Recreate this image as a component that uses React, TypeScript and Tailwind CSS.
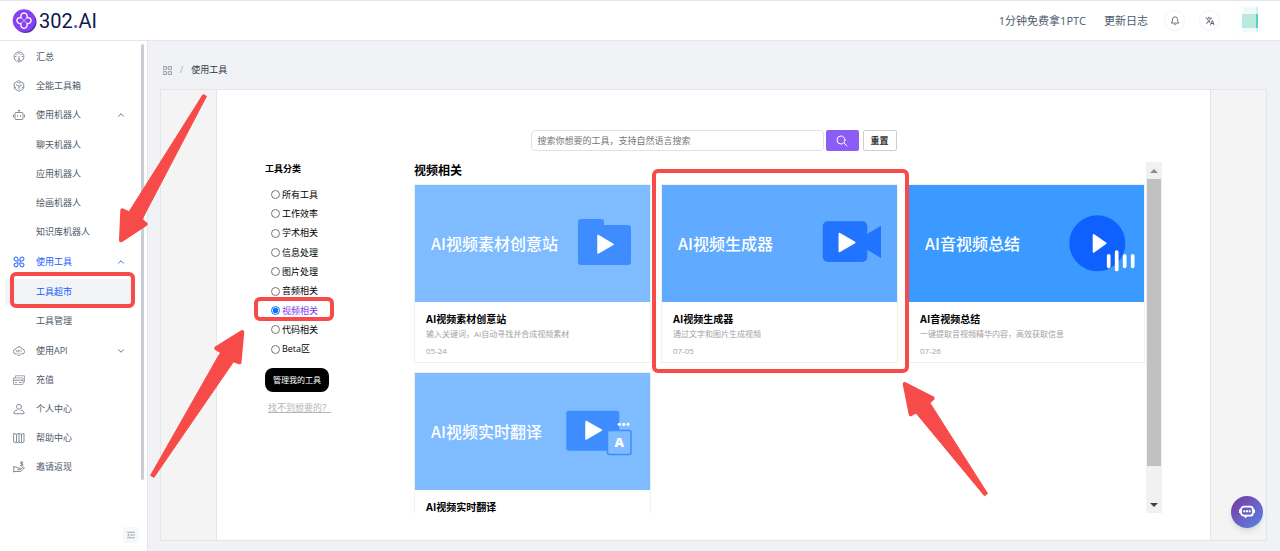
import { ReactNode, useState } from 'react';
import { LuBell, LuChevronDown, LuChevronUp } from 'react-icons/lu';
import { MdTranslate } from 'react-icons/md';

const stroke = {
  fill: 'none',
  stroke: 'currentColor',
  strokeLinecap: 'round' as const,
  strokeLinejoin: 'round' as const,
};

function Icon({ children }: { children: ReactNode }) {
  return (
    <svg viewBox="0 0 24 24" className="size-3 shrink-0" strokeWidth={2} {...stroke}>
      {children}
    </svg>
  );
}

const icons = {
  gauge: (
    <Icon>
      <path d="M7 20.500a10 10 0 1 1 10 0" />
      <path d="M12 4v2M4.500 11H6M19.500 11H18M7 6l1 1.500M17 6l-1 1.500M12 11v6" />
      <circle cx="12" cy="19.500" r="2.500" />
    </Icon>
  ),
  box: (
    <Icon>
      <path d="M12 1.500 21.500 7v10L12 22.500 2.500 17V7z" />
      <path d="M6.500 9.500L12 12.500l5.500-3M12 12.500V18M9 4.500l3 2 3-2M3 13.500l2.500 2M21 13.500l-2.500 2" />
    </Icon>
  ),
  robot: (
    <Icon>
      <rect x="4" y="7" width="16" height="14" rx="2" />
      <path d="M12 7V3M10.500 3h3M1 12v4M23 12v4M9 13v1.500M15 13v1.500" />
    </Icon>
  ),
  tools: (
    <Icon>
      <path d="M10 10H6a4 4 0 1 1 4-4zM14 10V6a4 4 0 1 1 4 4zM10 14v4a4 4 0 1 1-4-4zM14 14h4a4 4 0 1 1-4 4z" />
    </Icon>
  ),
  api: (
    <Icon>
      <path d="M8 18H6a5 5 0 0 1-.5-10 7 7 0 0 1 13 0A5 5 0 0 1 18 18h-2" />
      <path d="M6 14l1.500-4L9 14M11 14v-4h2v2h-2M16 10v4M12 17v4M10 21h4" strokeWidth={1.300} />
    </Icon>
  ),
  card: (
    <Icon>
      <path d="M5 7V3.500h18V16h-2" strokeWidth={1.500} />
      <rect x="1" y="8" width="19" height="13" rx="1" strokeWidth={1.500} />
      <path d="M1 12.500h19M5 17h2M13 17h3" />
    </Icon>
  ),
  user: (
    <Icon>
      <circle cx="12" cy="7.500" r="5" />
      <path d="M8 14.500H6L2 18v3.500h20V18l-4-3.500h-2" />
    </Icon>
  ),
  book: (
    <Icon>
      <path d="M2 3l5 1.500L12 3l5 1.500L22 3v17l-5 1.500-5-1.500-5 1.500L2 20zM7 5v14M12 3v17M17 5v14" />
    </Icon>
  ),
  reward: (
    <Icon>
      <path d="M1.500 11v11M1.500 12H6l4 2h4.500v3.500H9M14.500 16.500L21 12l2 1.500L15.500 21H1.500" />
      <path d="M19.500 2.500h-4V5.500h4V9h-4M17.500 1v9.500" />
    </Icon>
  ),
};

interface MenuEntry {
  label: string;
  icon: ReactNode;
  children?: string[];
  folded?: boolean;
  active?: boolean;
}

const menu: MenuEntry[] = [
  { label: '汇总', icon: icons.gauge },
  { label: '全能工具箱', icon: icons.box },
  {
    label: '使用机器人',
    icon: icons.robot,
    children: ['聊天机器人', '应用机器人', '绘画机器人', '知识库机器人'],
  },
  { label: '使用工具', icon: icons.tools, children: ['工具超市', '工具管理'], active: true },
  { label: '使用API', icon: icons.api, folded: true },
  { label: '充值', icon: icons.card },
  { label: '个人中心', icon: icons.user },
  { label: '帮助中心', icon: icons.book },
  { label: '邀请返现', icon: icons.reward },
];

const categories = [
  '所有工具',
  '工作效率',
  '学术相关',
  '信息处理',
  '图片处理',
  '音频相关',
  '视频相关',
  '代码相关',
  'Beta区',
];

interface Tool {
  title: string;
  desc?: string;
  date?: string;
  bg: string;
  marked?: boolean;
  art: ReactNode;
}

const tools: Tool[] = [
  {
    title: 'AI视频素材创意站',
    desc: '输入关键词，AI自动寻找并合成视频素材',
    date: '05-24',
    bg: 'bg-[#7ebcff]',
    art: (
      <>
        <path
          d="M16 12h20a3 3 0 0 1 3 3v3h24a3 3 0 0 1 3 3v34a3 3 0 0 1-3 3H16a3 3 0 0 1-3-3V15a3 3 0 0 1 3-3z"
          fill="#3f8cff"
        />
        <path d="M33 28.500v17.500l15-8.700z" fill="#fff" stroke="#fff" strokeWidth="1.500" strokeLinejoin="round" />
      </>
    ),
  },
  {
    title: 'AI视频生成器',
    desc: '通过文字和图片生成视频',
    date: '07-05',
    bg: 'bg-[#60abff]',
    marked: true,
    art: (
      <>
        <rect x="10.700" y="14.300" width="44.600" height="40.700" rx="5" fill="#2174ff" />
        <path d="M55 27l14-8.300V51l-14-8.300z" fill="#2174ff" />
        <path d="M27.300 26.500v18l15.500-9z" fill="#fff" stroke="#fff" strokeWidth="1.500" strokeLinejoin="round" />
      </>
    ),
  },
  {
    title: 'AI音视频总结',
    desc: '一键提取音视频精华内容，高效获取信息',
    date: '07-26',
    bg: 'bg-[#3b9aff]',
    art: (
      <>
        <circle cx="38.300" cy="36.300" r="28" fill="#0f60ff" />
        <path d="M34.700 28v16.700l11.800-8.400z" fill="#fff" stroke="#fff" strokeWidth="2" strokeLinejoin="round" />
        <path
          d="M49.700 48.800v10.500M57.700 45.200v17.300M65.700 48.800v10.500M73.700 48.800v10.500"
          stroke="#fff"
          strokeWidth="3.700"
          strokeLinecap="round"
        />
      </>
    ),
  },
  {
    title: 'AI视频实时翻译',
    bg: 'bg-[#7ebcff]',
    art: (
      <>
        <rect x="1.300" y="15.700" width="53" height="40" rx="2.500" fill="#3f8cff" />
        <path d="M21 26.500v17.500l15.500-8.800z" fill="#fff" stroke="#fff" strokeWidth="1.500" strokeLinejoin="round" />
        <g fill="#fff">
          <circle cx="54.300" cy="29.300" r="1.600" />
          <circle cx="58.700" cy="29.300" r="1.600" />
          <circle cx="63" cy="29.300" r="1.600" />
        </g>
        <rect x="42.500" y="35.500" width="23.500" height="24" rx="2" fill="#7ebcff" stroke="#3f8cff" strokeWidth="1.500" />
        <text x="54.300" y="52" textAnchor="middle" fontSize="13" fontWeight="800" fill="#fff">
          A
        </text>
      </>
    ),
  },
];

function Header() {
  return (
    <header className="flex h-[41px] items-center justify-between border-y border-[#e5e6eb] bg-white pr-[21px] pl-3">
      <a href="#" className="flex items-center gap-px">
        <svg viewBox="0 0 26 26" className="size-[26px]">
          <circle cx="13.500" cy="14" r="11" fill="#4a35b0" />
          <circle cx="12" cy="12.500" r="11.300" fill="#8a3ff0" />
          <path
            d="M9 9.300a3.200 3.200 0 1 1 6 0v.5a3 3 0 1 1 0 5.600v.6a3.200 3.200 0 1 1-6 0v-.6a3 3 0 1 1 0-5.600z"
            fill="none"
            stroke="#fff"
            strokeWidth="1.300"
          />
          <path d="M9.500 10l5 5M14.500 10l-5 5" stroke="#fff" strokeWidth=".6" />
        </svg>
        <span className="font-['Roboto',sans-serif] text-[20px] leading-6 text-[#0b1b4a]">
          302<span className="font-bold text-[#8a3ff0]">.</span>AI
        </span>
      </a>
      <nav className="flex items-center text-[11px] text-[#4e5969]">
        <a href="#">1分钟免费拿1PTC</a>
        <a href="#" className="ml-[18px]">
          更新日志
        </a>
        <button
          aria-label="通知"
          className="ml-4 grid size-[21px] place-items-center rounded-full border border-[#f2f3f5]"
        >
          <LuBell size={10} />
        </button>
        <button
          aria-label="语言"
          className="ml-[14px] grid size-[21px] place-items-center rounded-full border border-[#f2f3f5]"
        >
          <MdTranslate size={10} />
        </button>
        <svg viewBox="0 0 28 28" className="ml-[11px] size-7">
          <path d="M0 0h28v28H0z" fill="#fdfefe" />
          <path d="M12 0h13v7H12zM12 21h13v4H12z" fill="#f0faf8" />
          <path d="M11 7h14v14H11z" fill="#b9e9df" />
          <path d="M25 7h2v14h-2z" fill="#55d3bd" />
          <path d="M25 0h2v7h-2zM25 21h2v4h-2z" fill="#d5f1eb" />
        </svg>
      </nav>
    </header>
  );
}

function Sidebar() {
  return (
    <aside className="flex w-[148px] shrink-0 flex-col justify-between border-r border-[#e5e6eb] bg-white">
      <div className="flex justify-between pt-[3px] pr-[3px] pl-[5px]">
        <ul className="flex w-[129px] flex-col gap-[3px]">
          {menu.map((item) => (
            <li key={item.label} className={item.active ? 'text-[#165dff]' : 'text-[#4e5969]'}>
              <button className="flex h-[26px] w-full items-center gap-[11px] px-2">
                <span className={item.active ? 'text-[#165dff]' : 'text-[#86909c]'}>{item.icon}</span>
                {item.label}
                {item.children && <LuChevronUp size={10} className="ml-auto" />}
                {item.folded && <LuChevronDown size={10} className="ml-auto" />}
              </button>
              {item.children && (
                <ul className="flex flex-col gap-[3px] pt-1 pb-px text-[#4e5969]">
                  {item.children.map((child) => (
                    <li key={child} className="relative">
                      <a
                        href="#"
                        className={
                          child === '工具超市'
                            ? 'flex h-[26px] items-center rounded-xs bg-[#f2f3f5] pl-[31px] text-[#165dff]'
                            : 'flex h-[26px] items-center pl-[31px]'
                        }
                      >
                        {child}
                      </a>
                      {child === '工具超市' && (
                        <span className="absolute -top-[7px] -right-px -bottom-[3px] left-[5px] rounded-md border-4 border-[#f64b48]" />
                      )}
                    </li>
                  ))}
                </ul>
              )}
            </li>
          ))}
        </ul>
        <div className="w-[3px] rounded-full bg-[#c9cdd4]" />
      </div>
      <button
        aria-label="收起菜单"
        className="mr-2 mb-2 grid size-4 place-items-center self-end rounded-xs bg-[#f7f8fa] text-[#86909c]"
      >
        <svg viewBox="0 0 16 16" className="size-2" strokeWidth={1.600} {...stroke}>
          <path d="M1 2.500h14M7 8h8M1 13.500h14M4 6L1.500 8 4 10" />
        </svg>
      </button>
    </aside>
  );
}

function Categories({ value, onChange }: { value: string; onChange: (v: string) => void }) {
  return (
    <div className="flex w-[149px] shrink-0 flex-col items-start text-black">
      <h3 className="h-[23px] leading-[14px] font-bold">工具分类</h3>
      <ul className="grid h-[174px] auto-rows-fr">
        {categories.map((name) => (
          <li key={name} className="relative flex items-center pl-1.5">
            <label className={name === value ? 'flex items-center gap-[2px] text-[#7c3aed]' : 'flex items-center gap-[2px]'}>
              <input
                type="radio"
                name="category"
                className="size-[9px]"
                checked={name === value}
                onChange={() => onChange(name)}
              />
              {name}
            </label>
            {name === '视频相关' && (
              <span className="absolute -top-1 -bottom-px -left-[11px] w-20 rounded-md border-4 border-[#f64b48]" />
            )}
          </li>
        ))}
      </ul>
      <button className="mt-[9px] h-6 rounded-lg bg-black px-2 text-[8px] text-white">管理我的工具</button>
      <a href="#" className="mt-[10px] ml-[3px] text-[#b5b5b5] underline">
        找不到想要的？
      </a>
    </div>
  );
}

function ToolCard({ tool }: { tool: Tool }) {
  return (
    <li className="relative border border-[#f0f0f0]">
      <div className={`flex h-[117px] items-center justify-between pr-[5px] pl-4 ${tool.bg}`}>
        <span className="pb-[2px] font-['Noto_Sans_CJK_SC',sans-serif] text-[16px] font-medium whitespace-nowrap text-white">
          {tool.title}
        </span>
        <svg viewBox="0 0 80 73" className="h-[73px] w-20 shrink-0">
          {tool.art}
        </svg>
      </div>
      <div className="px-[11px] pt-[10px] pb-[5px]">
        <h4 className="text-[10px] leading-[15px] font-bold text-black">{tool.title}</h4>
        {tool.desc && <p className="text-[8px] leading-[14px] text-[#a3a3a3]">{tool.desc}</p>}
        {tool.date && <p className="mt-1 text-[8px] leading-3 text-[#a3a3a3]">{tool.date}</p>}
      </div>
      {tool.marked && (
        <span className="absolute -top-4 -right-3 -bottom-[11px] -left-[10px] z-10 rounded-md border-4 border-[#f64b48]" />
      )}
    </li>
  );
}

function Scrollbar() {
  return (
    <div className="flex w-4 shrink-0 flex-col bg-[#f1f1f1]">
      <button aria-label="向上" className="grid h-[17px] place-items-center">
        <svg viewBox="0 0 8 4" className="h-1 w-2">
          <path d="M0 4l4-4 4 4z" fill="#8b8b8b" />
        </svg>
      </button>
      <div className="mx-px h-[287px] bg-[#c1c1c1]" />
      <button aria-label="向下" className="mt-auto grid h-[17px] place-items-center">
        <svg viewBox="0 0 8 4" className="h-1 w-2">
          <path d="M0 0l4 4 4-4z" fill="#404040" />
        </svg>
      </button>
    </div>
  );
}

function Arrows() {
  return (
    <svg
      className="pointer-events-none absolute top-0 left-0 z-20 h-[551px] w-[1280px]"
      fill="#f64b48"
      stroke="#f64b48"
      strokeWidth="4"
      strokeLinejoin="round"
    >
      <path d="M122.300 210.300L121 240.300 145.700 224 140 219.500 144 212 129.500 213.500z" />
      <path strokeWidth="1" d="M203 94.500l3.500 1.800L142.500 218.500 129.500 211z" />
      <path d="M242.300 332L216.200 348.200 222 352 221 360 233 360 239.500 362.300z" />
      <path strokeWidth="1" d="M150.500 475.500l3.500 1.800L233 362.500 219.500 354z" />
      <path d="M904.700 384L932.700 398.300 928 402.500 918 410 910.700 414.300z" />
      <path strokeWidth="1" d="M987.500 493.500l-3 2.300L916 413l14-10z" />
    </svg>
  );
}

function App() {
  const [category, setCategory] = useState('视频相关');

  return (
    <div className="relative flex min-h-screen flex-col bg-[#f0f2f5] font-['Open_Sans','Noto_Sans_CJK_SC',sans-serif] text-[9px] leading-3">
      <Header />
      <div className="flex flex-1">
        <Sidebar />
        <main className="flex min-w-0 flex-1 flex-col pr-[13px] pb-2.5 pl-3">
          <div className="flex h-12 items-center pt-2.5 pl-[3px] text-[#4e5969]">
            <svg viewBox="0 0 16 16" className="size-[9px] text-[#86909c]" strokeWidth={1.500} {...stroke}>
              <path d="M1 1h5v5H1zM10 1h5v5h-5zM1 10h5v5H1zM10 10h5v5h-5z" />
            </svg>
            <span className="mx-2 text-[#a9aeb8]">/</span>
            <span className="text-[#2f3846]">使用工具</span>
          </div>
          <div className="flex-1 border border-[#e3e5e9] bg-[#f4f4f4] px-[55px]">
            <section className="h-full border-x border-[#e3e5e9] bg-white px-12 pt-10 pb-[27px]">
              <form className="flex justify-center" onSubmit={(e) => e.preventDefault()}>
                <input
                  type="text"
                  aria-label="搜索工具"
                  placeholder="搜索你想要的工具，支持自然语言搜索"
                  className="h-[21px] w-[293px] rounded-sm border border-[#e2e2e2] px-1.5 placeholder:text-[#757575]"
                />
                <button
                  aria-label="搜索"
                  className="ml-[2px] grid h-[21px] w-[33px] place-items-center rounded-xs bg-[#8b5cf6] text-white"
                >
                  <svg viewBox="0 0 24 24" className="size-3" strokeWidth={2} {...stroke}>
                    <circle cx="10" cy="10" r="8" />
                    <path d="M16 16L22 22" />
                  </svg>
                </button>
                <button
                  type="reset"
                  className="ml-1 h-[21px] w-[34px] rounded-xs border border-[#cfcfcf] font-bold text-[#333]"
                >
                  重置
                </button>
              </form>
              <div className="mt-[11px] flex">
                <Categories value={category} onChange={setCategory} />
                <div className="flex h-[351px] min-w-0 flex-1">
                  <div className="min-w-0 flex-1 overflow-hidden pr-px">
                    <h2 className="h-[22px] text-[12px] leading-[18px] font-bold text-black">{category}</h2>
                    <ul className="grid grid-cols-3 gap-x-[10px] gap-y-[9px]">
                      {tools.map((tool) => (
                        <ToolCard key={tool.title} tool={tool} />
                      ))}
                    </ul>
                  </div>
                  <Scrollbar />
                </div>
              </div>
            </section>
          </div>
        </main>
      </div>
      <button
        aria-label="客服"
        className="fixed right-[17px] bottom-[23px] grid size-8 place-items-center rounded-full bg-linear-to-br from-[#7434a0] to-[#4c86e6] shadow-md"
      >
        <svg viewBox="0 0 16 14" className="h-3.5 w-4">
          <rect x="2" y="1.700" width="12" height="9" rx="3" fill="none" stroke="#fff" strokeWidth="1.800" />
          <path d="M0 4.500h2v3.500H0zM14 4.500h2v3.500h-2zM5 11l1.500 2.500L8.500 11z" fill="#fff" />
          <path d="M4.300 5.300h2v2h-2zM7 5.300h2v2H7zM9.700 5.300h2v2h-2z" fill="#fff" />
        </svg>
      </button>
      <Arrows />
    </div>
  );
}

export default App;
